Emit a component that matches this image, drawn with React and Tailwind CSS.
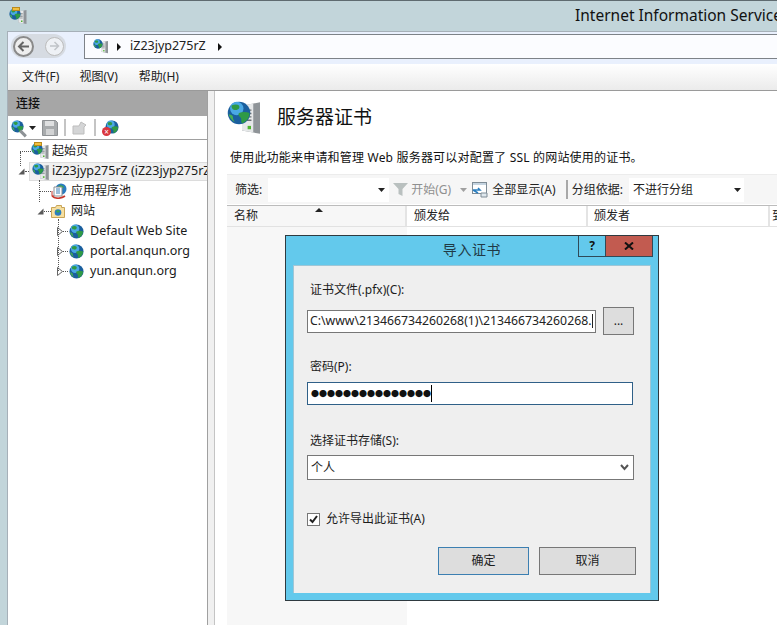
import React from 'react';

const FONT = "font-['Noto_Sans','Noto_Sans_CJK_SC',sans-serif]";

const Globe = ({ size = 16 }) => (
    <svg width={size} height={size} viewBox="0 0 16 16" className="shrink-0">
        <circle cx="8" cy="8" r="7.5" fill="#1a5f9e" />
        <circle cx="6.5" cy="5" r="4.500" fill="#4aa8e4" />
        <path d="M3 3c2-1 4-1 5 0 1 2-1 3-2 3S3 6 3 3zM8 8c2-1 5-1 7 0 0 3-2 6-5 7-1-2 0-3-1-4S7 9 8 8z" fill="#2f9a46" />
        <path d="M1 9c1 0 3 0 3 2s1 2 1 3c-2-1-3-3-4-5z" fill="#46ad54" />
    </svg>
);

const Server = ({ w = 8, h = 14 }) => (
    <svg width={w} height={h} viewBox="0 0 8 14" className="shrink-0">
        <path d="M0 1.500L8 0v14l-8-1.500z" fill="#8f9498" />
        <path d="M0 1.500L5 .6v12.800L0 12.500z" fill="#e6e8e9" />
        <path d="M.8 3.500h3.400M.8 5h3.400M.8 6.500h3.400M.8 8h3.400" stroke="#6a7074" strokeWidth=".6" />
        <rect x="2.500" y="10.500" width="1.500" height="1.500" fill="#4fb52f" />
    </svg>
);

const ServerGlobe = () => (
    <span className="relative inline-block w-[18px] h-[18px] shrink-0">
        <span className="absolute right-[1px] top-[2px]"><Server w={9} h={15} /></span>
        <span className="absolute left-0 top-0"><Globe size={12} /></span>
    </span>
);

const StartIcon = () => (
    <span className="relative inline-block w-[18px] h-[18px] shrink-0">
        <span className="absolute right-0 top-[3px]"><Server w={9} h={14} /></span>
        <span className="absolute left-0 top-[1px]"><Globe size={12} /></span>
        <span className="absolute left-[3px] top-0 w-[8px] h-[4px] bg-[#f0c040] border border-[#b98a1e]" />
    </span>
);

const PoolIcon = () => (
    <svg width="16" height="16" viewBox="0 0 16 16" className="shrink-0">
        <circle cx="10" cy="6" r="5.500" fill="#2a7cc0" />
        <path d="M7 3c2-1 4-1 6 1-1 2-4 2-6-1z" fill="#3aa84c" />
        <path d="M3 4h8v9H3z" fill="#fff" stroke="#8a8f94" />
        <path d="M5 6h4M5 8h4M5 10h4" stroke="#3b7fb6" />
        <path d="M1 13c3 3 9 3 13 0" fill="none" stroke="#c8372c" strokeWidth="1.6" />
        <path d="M1 8v5h2" fill="none" stroke="#c8372c" strokeWidth="1" />
    </svg>
);

const SitesIcon = () => (
    <svg width="14" height="13" viewBox="0 0 14 13" className="shrink-0">
        <path d="M.5 2.500h4l1-2h5v2h3v10H.5z" fill="#f6dfa0" stroke="#c8a456" />
        <circle cx="7" cy="7.500" r="3.300" fill="#2a7cc0" />
        <path d="M5 6c1-1 3-1 4 0-1 2-3 2-4 0z" fill="#3aa84c" />
    </svg>
);

const Expanded = () => (
    <svg width="7" height="7" viewBox="0 0 7 7" className="shrink-0"><path d="M6.500 .5v6h-6z" fill="#595959" /></svg>
);

const Collapsed = () => (
    <svg width="6" height="9" viewBox="0 0 6 9" className="shrink-0"><path d="M.5 .5l5 4-5 4z" fill="#fff" stroke="#666" /></svg>
);

const Caret = ({ className = '' }) => (
    <svg width="7" height="4" viewBox="0 0 7 4" className={`shrink-0 ${className}`}><path d="M0 0h7L3.500 4z" fill="#222" /></svg>
);

const Sep = () => <span className="w-[2px] h-[17px] bg-[#c4c4c4] shrink-0" />;

const Dots = ({ w }) => <span className="border-t border-dotted border-[#555] shrink-0" style={{ width: w }} />;

const SiteRow = ({ name }) => (
    <div className="h-[20px] flex items-center pl-[49px]">
        <Collapsed />
        <Dots w={5} />
        <span className="ml-[1px]"><Globe size={15} /></span>
        <span className="ml-[6px] text-[12.5px]">{name}</span>
    </div>
);

const Tree = () => (
    <div className="relative pt-[1px] text-[12px] text-[#1a1a1a]">
        <span className="absolute left-[12px] top-[12px] h-[14px] border-l border-dotted border-[#555]" />
        <span className="absolute left-[31px] top-[40px] h-[22px] border-l border-dotted border-[#555]" />
        <span className="absolute left-[50px] top-[79px] h-[52px] border-l border-dotted border-[#555]" />
        <div className="h-[20px] flex items-center pl-[12px]">
            <Dots w={11} />
            <StartIcon />
            <span className="ml-[3px]">起始页</span>
        </div>
        <div className="h-[19px] mt-[1px] flex items-center pl-[10px]">
            <Expanded />
            <Dots w={4} />
            <div className="flex-1 min-w-0 h-[19px] flex items-center bg-[#f0f0f0] border border-[#dcdcdc] border-r-0 pl-[2px] overflow-hidden whitespace-nowrap">
                <ServerGlobe />
                <span className="ml-[2px] text-[12.5px]">iZ23jyp275rZ (iZ23jyp275rZ\Administrator)</span>
            </div>
        </div>
        <div className="h-[20px] flex items-center pl-[32px]">
            <Dots w={11} />
            <PoolIcon />
            <span className="ml-[4px]">应用程序池</span>
        </div>
        <div className="h-[20px] flex items-center pl-[29px]">
            <Expanded />
            <Dots w={7} />
            <SitesIcon />
            <span className="ml-[6px]">网站</span>
        </div>
        <SiteRow name="Default Web Site" />
        <SiteRow name="portal.anqun.org" />
        <SiteRow name="yun.anqun.org" />
    </div>
);

const LeftPane = () => (
    <div className="w-[200px] shrink-0 flex flex-col border-r border-[#a0a0a0]">
        <div className="h-[25px] bg-[#a6a6a6] flex items-center pl-[8px] text-[12px] font-medium text-[#111]">连接</div>
        <div className="h-[24px] bg-white flex items-center pl-[3px] gap-[6px] border-b border-[#a0a0a0]">
            <div className="flex items-center gap-[2px]">
                <span className="relative w-[16px] h-[16px] shrink-0">
                    <Globe size={13} />
                    <span className="absolute right-0 bottom-[1px] w-[8px] h-[3px] rotate-45 bg-[#8d9296]" />
                </span>
                <Caret />
            </div>
            <svg width="16" height="16" viewBox="0 0 16 16" className="shrink-0">
                <path d="M.5 .5h13l2 2v13H.5z" fill="#a8abad" stroke="#8e9194" />
                <rect x="3" y="1" width="9" height="5" fill="#dfe0e1" />
                <rect x="4" y="9" width="8" height="6" fill="#d2d3d4" />
            </svg>
            <Sep />
            <svg width="16" height="14" viewBox="0 0 16 14" className="shrink-0">
                <path d="M1 5h6l2-4 5 3-2 2v7H1z" fill="#d4d5d6" stroke="#bdbdbd" />
            </svg>
            <Sep />
            <span className="relative w-[17px] h-[16px] shrink-0">
                <span className="absolute right-0 top-0"><Globe size={14} /></span>
                <span className="absolute left-0 bottom-0 w-[9px] h-[9px] rounded-full bg-[#d9363e] text-white text-[8px] leading-[9px] text-center">×</span>
            </span>
        </div>
        <div className="flex-1 bg-white"><Tree /></div>
    </div>
);

const ListHeader = () => (
    <div className="relative h-[22px] mt-[1px] flex text-[12px] text-[#222] bg-[#f7f7f7] border-b border-[#e2e2e2] border-t border-t-[#bcbcbc]">
        <div className="w-[180px] pl-[7px] flex items-center border-r-2 border-[#e4e4e4]">名称</div>
        <div className="w-[181px] pl-[7px] flex items-center bg-white border-r-2 border-[#e4e4e4]">颁发给</div>
        <div className="w-[182px] pl-[6px] flex items-center bg-white border-r-2 border-[#e4e4e4]">颁发者</div>
        <div className="flex-1 pl-[2px] flex items-center bg-white overflow-hidden whitespace-nowrap">到期日期</div>
        <span className="absolute left-[88px] top-[2px] w-0 h-0 border-x-[4px] border-x-transparent border-b-[4px] border-b-[#222]" />
    </div>
);

const RightPane = () => (
    <div className="flex-1 min-w-0 bg-white pl-[12px] flex flex-col">
        <div className="h-[46px] flex items-center mt-[3px]">
            <span className="relative w-[33px] h-[33px] shrink-0">
                <span className="absolute right-0 top-[1px]"><Server w={18} h={32} /></span>
                <span className="absolute left-0 top-0"><Globe size={24} /></span>
            </span>
            <span className="ml-[17px] text-[19px] text-[#111]">服务器证书</span>
        </div>
        <div className="h-[20px] mt-[8px] pl-[3px] flex items-center text-[12px] tracking-[0.2px] text-[#111] whitespace-nowrap">
            使用此功能来申请和管理 Web 服务器可以对配置了 SSL 的网站使用的证书。
        </div>
        <div className="h-[30px] mt-[6px] flex items-center bg-[#f6f6f6] border-t border-[#ececec] text-[12px] text-[#222] whitespace-nowrap">
            <span className="ml-[8px]">筛选:</span>
            <div className="ml-[6px] w-[121px] h-[24px] bg-white flex items-center justify-end pr-[4px]"><Caret /></div>
            <svg width="15" height="13" viewBox="0 0 15 13" className="ml-[4px] shrink-0">
                <path d="M0 0h15L9.500 6v7l-4-2V6z" fill="#b9c0bf" />
            </svg>
            <span className="ml-[3px] text-[#8f8f8f]">开始(G)</span>
            <Caret className="ml-[9px] opacity-40" />
            <svg width="16" height="16" viewBox="0 0 16 16" className="ml-[5px] shrink-0">
                <rect x=".5" y=".5" width="14" height="11" fill="#fff" stroke="#7f8c96" />
                <path d="M1 1h13v2H1z" fill="#c5d4e0" />
                <path d="M1 8h7l-2-2M1 8l5 3" fill="none" stroke="#2b7fc0" strokeWidth="1.5" />
                <path d="M9 11h6v4H9z" fill="#dfe8ee" stroke="#7f8c96" />
            </svg>
            <span className="ml-[4px] tracking-[0.1px]">全部显示(A)</span>
            <span className="ml-[10px] w-[2px] h-[19px] bg-[#a8a8a8]" />
            <span className="ml-[4px]">分组依据:</span>
            <div className="ml-[6px] w-[115px] h-[24px] bg-white flex items-center justify-between pl-[4px] pr-[3px]">
                <span>不进行分组</span>
                <Caret />
            </div>
        </div>
        <ListHeader />
        <div className="flex-1 flex">
            <div className="w-[180px] bg-[#f7f7f7]" />
        </div>
    </div>
);

const FieldLabel = ({ children, className = '' }) => (
    <div className={`pl-[3px] h-[16px] leading-[16px] text-[12px] text-[#1c1c1c] ${className}`}>{children}</div>
);

const Dialog = () => (
    <div className="absolute left-[285px] top-[234px] w-[374px] h-[366px] bg-[#63c9ec] border border-[#2f3a40] flex flex-col px-[7px] pb-[7px] text-[12px] text-[#1c1c1c]">
        <div className="relative h-[29px] shrink-0 flex items-center justify-center">
            <span className="text-[14px] pb-[3px] text-[#1f3a46] tracking-[0.6px]">导入证书</span>
            <div className="absolute right-[-2px] top-0 h-[21px] flex border border-t-0 border-[#2f4a58]">
                <div className="w-[27px] flex items-center justify-center text-[12px] font-bold text-[#111] border-r border-[#2f4a58]">?</div>
                <div className="w-[46px] bg-[#c25b50] flex items-center justify-center">
                    <svg width="10" height="8" viewBox="0 0 10 8"><path d="M1 .5l8 7M9 .5l-8 7" fill="none" stroke="#111" strokeWidth="2" /></svg>
                </div>
            </div>
        </div>
        <div className="flex-1 bg-[#efefef] border border-[#9fc6d6] border-b-0 pl-[13px] pt-[16px] relative">
            <FieldLabel>证书文件(.pfx)(C):</FieldLabel>
            <div className="mt-[9px] flex items-center gap-[7px]">
                <div className="w-[289px] h-[23px] bg-white border border-[#777] flex items-center pl-[2px] overflow-hidden whitespace-nowrap text-[12.25px] text-[#222]">
                    C:\www\213466734260268(1)\213466734260268.<span className="ml-[1px] w-[1px] h-[14px] bg-[#222]" />
                </div>
                <div className="w-[31px] h-[28px] bg-[#dddddd] border border-[#777] flex items-center justify-center">...</div>
            </div>
            <FieldLabel className="mt-[24px]">密码(P):</FieldLabel>
            <div className="mt-[7px] w-[326px] h-[23px] bg-white border border-[#2f6088] flex items-center pl-[3px]">
                <span className="text-[8px] leading-none text-[#111]">●●●●●●●●●●●●●●●</span>
                <span className="w-[1px] h-[17px] bg-black" />
            </div>
            <FieldLabel className="mt-[28px]">选择证书存储(S):</FieldLabel>
            <div className="mt-[6px] w-[327px] h-[25px] bg-white border border-[#777] flex items-center justify-between pl-[3px] pr-[4px]">
                <span>个人</span>
                <svg width="9" height="7" viewBox="0 0 9 7"><path d="M1 1l3.500 4L8 1" fill="none" stroke="#555" strokeWidth="2" /></svg>
            </div>
            <div className="mt-[30px] flex items-center">
                <div className="w-[13px] h-[13px] bg-white border border-[#777] flex items-center justify-center">
                    <svg width="9" height="9" viewBox="0 0 9 9"><path d="M1 4.500l2.500 2.500L8 1" fill="none" stroke="#222" strokeWidth="2" /></svg>
                </div>
                <span className="ml-[6px]">允许导出此证书(A)</span>
            </div>
            <div className="mt-[19px] flex pl-[131px] gap-[10px]">
                <div className="w-[91px] h-[28px] bg-[#dddddd] border border-[#3c7fb1] flex items-center justify-center">确定</div>
                <div className="w-[97px] h-[28px] bg-[#dddddd] border border-[#777] flex items-center justify-center">取消</div>
            </div>
        </div>
    </div>
);

export default function App() {
    return (
        <div className={`relative w-[777px] h-[625px] overflow-hidden bg-[#c2d5da] border-t border-[#5f6b70] flex flex-col ${FONT}`}>
            <div className="h-[30px] shrink-0 flex items-center pl-[9px]">
                <StartIcon />
                <span className="ml-auto pb-[1px] w-[202px] shrink-0 whitespace-nowrap overflow-hidden text-[15.5px] text-[#111]">Internet Information Services (IIS) Manager</span>
            </div>
            <div className="flex-1 min-h-0 ml-[7px] flex flex-col border-l border-t border-[#a6b0b8] bg-[#f0f0f0]">
                <div className="h-[32px] shrink-0 bg-[#e9f0fd] flex items-start pt-[2px]">
                    <div className="ml-[3px] w-[55px] h-[24px] bg-[#d6dbe2] rounded-[12px] flex items-center justify-between px-[2px]">
                        <span className="w-[21px] h-[21px] rounded-full border-2 border-[#8a8a8a] bg-[#eeeeee] flex items-center justify-center">
                            <svg width="13" height="11" viewBox="0 0 13 11"><path d="M12 5.500H3M6.500 1L2 5.500 6.500 10" fill="none" stroke="#666" strokeWidth="2" /></svg>
                        </span>
                        <span className="w-[19px] h-[19px] rounded-full border border-[#bcbcbc] bg-[#eef1f5] flex items-center justify-center">
                            <svg width="11" height="10" viewBox="0 0 11 10"><path d="M1 5h8M5.500 1L9.500 5 5.500 9" fill="none" stroke="#c0c4c8" strokeWidth="1.500" /></svg>
                        </span>
                    </div>
                    <div className="ml-[18px] flex-1 h-[25px] bg-[#fbfcff] border-t border-b border-l border-[#7d8288] flex items-center pl-[8px] text-[12.5px] text-[#222]">
                        <span className="relative inline-block w-[15px] h-[16px]">
                            <span className="absolute right-0 top-[1px]"><Server w={7} h={14} /></span>
                            <span className="absolute left-0 top-0"><Globe size={10} /></span>
                        </span>
                        <span className="ml-[9px] w-0 h-0 border-y-[4px] border-y-transparent border-l-[4px] border-l-[#111]" />
                        <span className="ml-[9px]">iZ23jyp275rZ</span>
                        <span className="ml-[12px] w-0 h-0 border-y-[4px] border-y-transparent border-l-[4px] border-l-[#111]" />
                    </div>
                </div>
                <div className="h-[27px] shrink-0 flex items-center pl-[14px] pb-[1px] gap-[20px] bg-gradient-to-b from-white to-[#ebebeb] border-b border-[#9a9a9a] text-[12px] text-[#222]">
                    <span>文件(F)</span>
                    <span>视图(V)</span>
                    <span className="ml-[1px]">帮助(H)</span>
                </div>
                <div className="flex-1 min-h-0 flex">
                    <LeftPane />
                    <div className="w-[6px] shrink-0 bg-[#f0f0f0]" />
                    <div className="flex-1 min-w-0 flex border-l border-[#c4c4c4]">
                        <RightPane />
                    </div>
                </div>
            </div>
            <Dialog />
        </div>
    );
}
